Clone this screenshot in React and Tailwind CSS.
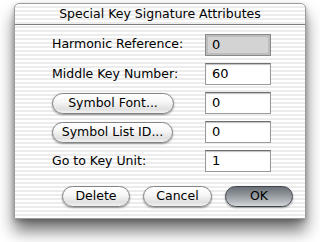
import React from 'react';

const stripes =
  'bg-[repeating-linear-gradient(180deg,#ffffff_0px,#ffffff_2px,#ececec_2px,#ececec_4px)]';

const Field = ({ value, disabled }) => (
  <div
    className={`w-[66px] h-[22px] flex items-center pl-[6px] text-[13px] text-black border ${
      disabled
        ? 'bg-[#d3d3d3] border-[#8a8a8a] shadow-[inset_0_0_0_2px_#bdbdbd]'
        : 'bg-white border-[#9a9a9a] border-t-[#6f6f6f] shadow-[inset_0_1px_1px_rgba(0,0,0,0.25)]'
    }`}
  >
    {value}
  </div>
);

const AquaButton = ({ label, className = '', primary }) => (
  <div
    className={`h-[21px] flex items-center justify-center rounded-full border text-[12.5px] text-black shadow-[0_1px_2px_rgba(0,0,0,0.4)] ${
      primary
        ? 'border-[#3f444a] bg-[linear-gradient(180deg,#6c7178_0%,#8f949a_40%,#b9bdc2_80%,#d6d9dc_100%)]'
        : 'border-[#828282] bg-[linear-gradient(180deg,#ffffff_0%,#f7f7f7_40%,#e0e0e0_80%,#f2f2f2_100%)]'
    } ${className}`}
  >
    {label}
  </div>
);

const Row = ({ children, value, disabled, className = '' }) => (
  <div className={`flex items-center justify-between ${className}`}>
    <div className="flex-1">{children}</div>
    <Field value={value} disabled={disabled} />
  </div>
);

export default function App() {
  return (
    <div
      className="w-[320px] h-[242px] bg-white overflow-hidden pt-[3px] pl-[14px]"
      style={{ fontFamily: '"DejaVu Sans", "Liberation Sans", sans-serif' }}
    >
      <div
        className={`w-[292px] h-[216px] flex flex-col rounded-t-[5px] border border-[#9c9c9c] ${stripes} shadow-[0_12px_16px_rgba(0,0,0,0.55),0_2px_5px_rgba(0,0,0,0.25)]`}
      >
        {/* Title bar */}
        <div className="h-[21px] flex items-center justify-center border-b border-[#7d7d7d] text-[12.5px] text-black">
          Special Key Signature Attributes
        </div>

        {/* Fields */}
        <div className="flex flex-col gap-[7px] pt-[8px] pl-[37px] pr-[34px] text-[12.5px] text-black">
          <Row value="0" disabled className="h-[23px]">
            Harmonic Reference:
          </Row>
          <Row value="60" className="h-[22px]">
            Middle Key Number:
          </Row>
          <Row value="0" className="h-[22px]">
            <AquaButton label="Symbol Font..." className="w-[122px]" />
          </Row>
          <Row value="0" className="h-[22px]">
            <AquaButton label="Symbol List ID..." className="w-[121px]" />
          </Row>
          <Row value="1" className="h-[22px]">
            Go to Key Unit:
          </Row>
        </div>

        {/* Buttons */}
        <div className="flex justify-end gap-[13px] pt-[14px] pr-[12px]">
          <AquaButton label="Delete" className="w-[68px]" />
          <AquaButton label="Cancel" className="w-[69px]" />
          <AquaButton label="OK" primary className="w-[68px]" />
        </div>
      </div>
    </div>
  );
}
